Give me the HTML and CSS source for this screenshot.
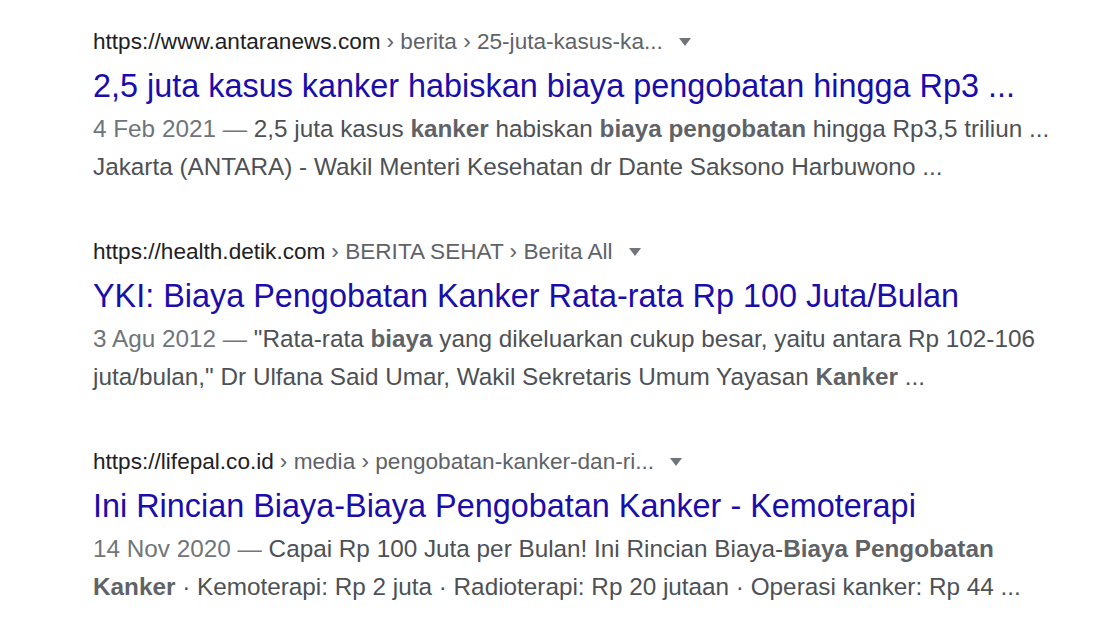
FILE: index.html
```html
<!DOCTYPE html>
<html lang="id">
<head>
<meta charset="utf-8">
<link rel="stylesheet" href="styles.css">
</head>
<body>
<main class="results">
  <div class="result">
    <div class="url"><span class="host">https://www.antaranews.com</span><span class="crumb">› berita › 25-juta-kasus-ka...</span><span class="arrow"></span></div>
    <a class="title" href="#">2,5 juta kasus kanker habiskan biaya pengobatan hingga Rp3 ...</a>
    <div class="snippet"><span class="date">4 Feb 2021 — </span>2,5 juta kasus <b>kanker</b> habiskan <b>biaya pengobatan</b> hingga Rp3,5 triliun ...<br>Jakarta (ANTARA) - Wakil Menteri Kesehatan dr Dante Saksono Harbuwono ...</div>
  </div>
  <div class="result">
    <div class="url"><span class="host">https://health.detik.com</span><span class="crumb">› BERITA SEHAT › Berita All</span><span class="arrow"></span></div>
    <a class="title" href="#">YKI: Biaya Pengobatan Kanker Rata-rata Rp 100 Juta/Bulan</a>
    <div class="snippet"><span class="date">3 Agu 2012 — </span>"Rata-rata <b>biaya</b> yang dikeluarkan cukup besar, yaitu antara Rp 102-106<br>juta/bulan," Dr Ulfana Said Umar, Wakil Sekretaris Umum Yayasan <b>Kanker</b> ...</div>
  </div>
  <div class="result">
    <div class="url"><span class="host">https://lifepal.co.id</span><span class="crumb">› media › pengobatan-kanker-dan-ri...</span><span class="arrow"></span></div>
    <a class="title" href="#">Ini Rincian Biaya-Biaya Pengobatan Kanker - Kemoterapi</a>
    <div class="snippet"><span class="date">14 Nov 2020 — </span>Capai Rp 100 Juta per Bulan! Ini Rincian Biaya-<b>Biaya Pengobatan</b><br><b>Kanker</b> · Kemoterapi: Rp 2 juta · Radioterapi: Rp 20 jutaan · Operasi kanker: Rp 44 ...</div>
  </div>
</main>
</body>
</html>
```
FILE: styles.css
```css
html, body {
  margin: 0;
  padding: 0;
  background: #ffffff;
}
body {
  font-family: "Liberation Sans", Arial, sans-serif;
}
.results {
  display: flex;
  flex-direction: column;
  gap: 51px;
  padding: 27px 0 0 93px;
}
.result {
  display: flex;
  flex-direction: column;
}
.url {
  display: flex;
  align-items: center;
  font-size: 22.6px;
  line-height: 30px;
  white-space: nowrap;
}
.host {
  color: #202124;
}
.crumb {
  color: #5f6368;
  padding-left: 6px;
}
.arrow {
  width: 0;
  height: 0;
  margin-left: 16px;
  border-left: 6.5px solid transparent;
  border-right: 6.5px solid transparent;
  border-top: 8px solid #70757a;
}
.title {
  margin-top: 8px;
  font-size: 32.4px;
  line-height: 42px;
  color: #1a0dab;
  text-decoration: none;
  white-space: nowrap;
}
.snippet {
  margin-top: 3px;
  font-size: 24.3px;
  line-height: 38px;
  color: #4d5156;
  white-space: nowrap;
}
.snippet b {
  color: #5f6368;
  font-weight: bold;
}
.date {
  color: #70757a;
}
```
